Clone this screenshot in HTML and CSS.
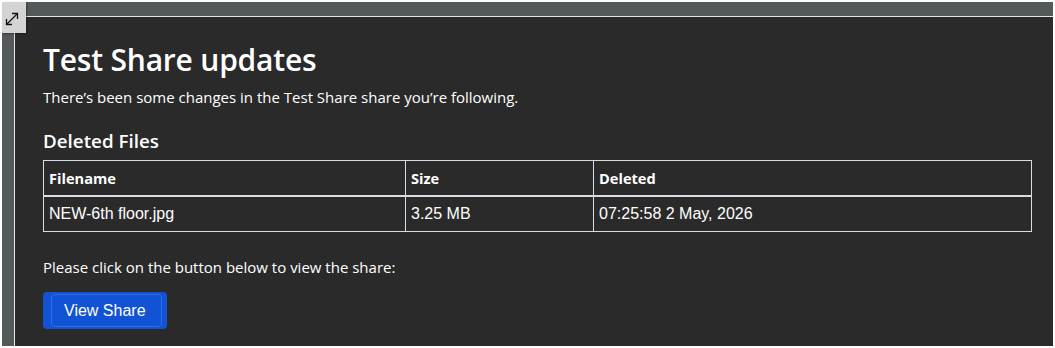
FILE: index.html
```html
<!DOCTYPE html>
<html>
<head>
<meta charset="utf-8">
<link rel="stylesheet" href="styles.css">
</head>
<body>
<div class="frame">
  <div class="expand">
    <svg width="14" height="14" viewBox="0 0 14 14" fill="none" stroke="#111" stroke-width="1.3">
      <path d="M1.5 12.5 L12.5 1.5"/>
      <path d="M7 1.5 H12.5 V7"/>
      <path d="M1.5 7 V12.5 H7"/>
    </svg>
  </div>
  <div class="content">
    <h1 class="title">Test Share updates</h1>
    <p class="intro">There’s been some changes in the Test Share share you’re following.</p>
    <h2 class="section">Deleted Files</h2>
    <table class="files">
      <thead>
        <tr><th class="c1">Filename</th><th class="c2">Size</th><th>Deleted</th></tr>
      </thead>
      <tbody>
        <tr><td>NEW-6th floor.jpg</td><td>3.25 MB</td><td>07:25:58 2 May, 2026</td></tr>
      </tbody>
    </table>
    <p class="note">Please click on the button below to view the share:</p>
    <a class="btn"><span class="btn-inner">View Share</span></a>
  </div>
</div>
</body>
</html>
```
FILE: styles.css
```css
html, body {
  margin: 0;
  padding: 0;
  background: #ffffff;
  height: 100%;
}
body {
  padding: 2px 2px 2px 2px;
  box-sizing: border-box;
  width: 1055px;
  height: 348px;
  overflow: hidden;
}
.frame {
  position: relative;
  background: #54595a;
  height: 344px;
  padding: 14px 0 0 12px;
  box-sizing: border-box;
  display: flex;
}
.expand {
  position: absolute;
  left: 0;
  top: 0;
  width: 24px;
  height: 31px;
  background: #d4d4d4;
  box-shadow: 1px 1px 2px rgba(0,0,0,0.35);
  display: flex;
  align-items: center;
  justify-content: center;
  box-sizing: border-box;
  z-index: 2;
}
.expand svg {
  display: block;
  margin-right: 5px;
  margin-top: 2px;
}
.content {
  flex: 1;
  background: #2a2a2a;
  border-top: 1px solid #e6e6e6;
  border-left: 1px solid #e6e6e6;
  padding: 24px 21px 0 28px;
  color: #ffffff;
  font-family: "Open Sans", "Noto Sans", sans-serif;
}
.title {
  margin: 0;
  font-size: 30px;
  font-weight: 600;
  line-height: 38px;
  letter-spacing: -0.2px;
}
.intro {
  margin: 8px 0 0 0;
  font-size: 15px;
  line-height: 20px;
}
.section {
  margin: 22px 0 0 0;
  font-size: 18.8px;
  font-weight: 600;
  line-height: 24px;
}
.files {
  margin-top: 7px;
  width: 989px;
  border-collapse: collapse;
  font-family: "Liberation Sans", Arial, sans-serif;
}
.files th, .files td {
  border: 1px solid #dcdce6;
  text-align: left;
  padding: 0 5px;
}
.files th {
  font-family: "Open Sans", "Noto Sans", sans-serif;
  font-weight: 700;
  font-size: 14.6px;
  height: 34px;
  border-bottom-width: 2px;
}
.files td {
  font-size: 16px;
  height: 34px;
}
.files .c1 { width: 351px; }
.files .c2 { width: 177px; }
.note {
  margin: 25px 0 0 0;
  font-size: 15px;
  line-height: 20px;
}
.btn {
  display: inline-block;
  margin-top: 15px;
  background: #1153d4;
  border-radius: 4px;
  padding: 2px 5px 2px 8px;
}
.btn-inner {
  display: block;
  border: 1px solid #2e6ee6;
  border-radius: 4px;
  padding: 0 15px 0 12px;
  height: 31px;
  line-height: 31px;
  font-family: "Liberation Sans", Arial, sans-serif;
  font-size: 16px;
  color: #ffffff;
}
```
